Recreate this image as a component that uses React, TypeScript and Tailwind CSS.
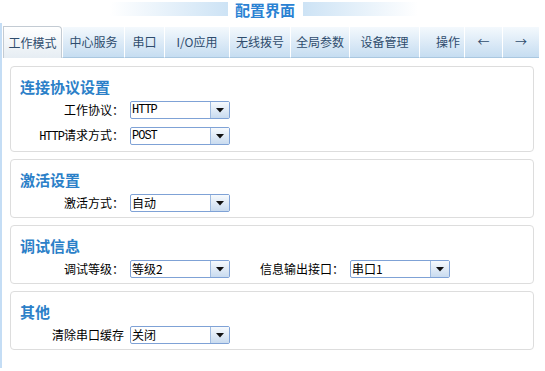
import React from "react";

const FONT = { fontFamily: '"Noto Sans CJK SC", "Liberation Sans", sans-serif' };
const MONO = { fontFamily: '"Liberation Mono", monospace' };

function Arrow() {
  return (
    <svg width="8" height="5" viewBox="0 0 8 5">
      <path d="M0 0 H8 L4 4.5 Z" fill="#111" />
    </svg>
  );
}

function Select({ value, latin }: { value: string; latin?: boolean }) {
  return (
    <div className="flex h-[18px] w-[100px] shrink-0 rounded-[2px] border border-[#7fa2d6] bg-white">
      <div
        className={
          "flex flex-1 items-center pl-[1px] text-[12px] leading-none text-black " + (latin ? "tracking-[-1px]" : "")
        }
        style={latin ? MONO : undefined}
      >
        {value}
      </div>
      <div className="flex w-[19px] items-center justify-center border-l border-[#9fbbe0] bg-gradient-to-b from-[#f7fafd] to-[#c9dbef]">
        <Arrow />
      </div>
    </div>
  );
}

function Label({ children, w = "w-[119px]" }: { children: React.ReactNode; w?: string }) {
  return (
    <div className={`${w} shrink-0 pr-[6px] text-right text-[12px] leading-[18px] text-black`}>{children}</div>
  );
}

function Section({ title, children }: { title: string; children: React.ReactNode }) {
  return (
    <div className="w-[524px] rounded-[4px] border border-[#dddddd] bg-white pb-[5px] pt-[10px]">
      <div className="pl-[9px] text-[15px] font-bold leading-[20px] text-[#2b80c8]">{title}</div>
      <div className="mt-[4px] flex flex-col gap-[7px]">{children}</div>
    </div>
  );
}

const tabs: { t: string; w: string; extra?: string }[] = [
  { t: "中心服务", w: "w-[62px]" },
  { t: "串口", w: "w-[40px]" },
  { t: "I/O应用", w: "w-[65px]" },
  { t: "无线拨号", w: "w-[61px]" },
  { t: "全局参数", w: "w-[59px]" },
  { t: "设备管理", w: "w-[70px]" },
  { t: "操作", w: "w-[45px]", extra: "justify-end pr-[4px]" },
  { t: "←", w: "w-[38px]" },
  { t: "→", w: "w-[37px]" },
];

export default function App() {
  return (
    <div className="h-[371px] w-[545px] overflow-hidden bg-white" style={FONT}>
      {/* title */}
      <div className="flex h-[20px] items-center pl-[110px]">
        <div className="mt-[-2px] h-[14px] w-[118px] bg-gradient-to-r from-white to-[#cde3f5]" />
        <div className="ml-[7px] text-[15px] font-bold leading-[20px] text-[#2a82d3]">配置界面</div>
        <div className="ml-[8px] mt-[-2px] h-[14px] w-[115px] bg-gradient-to-r from-[#cde3f5] to-white" />
      </div>
      {/* body */}
      <div className="mt-[3px] h-[345px] border-l-2 border-[#c4ddf5] pt-[3px]">
        <div className="flex items-end pl-[1px]">
          <div className="flex h-[32px] w-[59px] items-center justify-center rounded-tr-[4px] border-x border-t border-[#c3cbd3] bg-gradient-to-b from-white to-[#e6edf3] text-[12px] text-[#2e4c6d]">
            工作模式
          </div>
          {tabs.map((tab) => (
            <div
              key={tab.t}
              className={`flex h-[31px] ${tab.w} items-center border-b border-l border-b-[#a9c7e0] border-l-white bg-gradient-to-b from-[#f4f9fd] to-[#c6ddf1] text-[12px] text-[#2e4c6d] ${
                tab.extra ?? "justify-center"
              }`}
            >
              {tab.t}
            </div>
          ))}
        </div>
        <div className="mt-[8px] flex flex-col gap-[7px] pl-[8px]">
          <Section title="连接协议设置">
            <div className="flex items-center">
              <Label>工作协议：</Label>
              <Select value="HTTP" latin />
            </div>
            <div className="flex items-center">
              <Label>
                <span className="tracking-[-1px]" style={MONO}>
                  HTTP
                </span>
                请求方式：
              </Label>
              <Select value="POST" latin />
            </div>
          </Section>
          <Section title="激活设置">
            <div className="flex items-center">
              <Label>激活方式：</Label>
              <Select value="自动" />
            </div>
          </Section>
          <Section title="调试信息">
            <div className="flex items-center">
              <Label>调试等级：</Label>
              <Select value="等级2" />
              <Label w="w-[120px]">信息输出接口：</Label>
              <Select value="串口1" />
            </div>
          </Section>
          <Section title="其他">
            <div className="flex items-center">
              <Label>清除串口缓存</Label>
              <Select value="关闭" />
            </div>
          </Section>
        </div>
      </div>
    </div>
  );
}
